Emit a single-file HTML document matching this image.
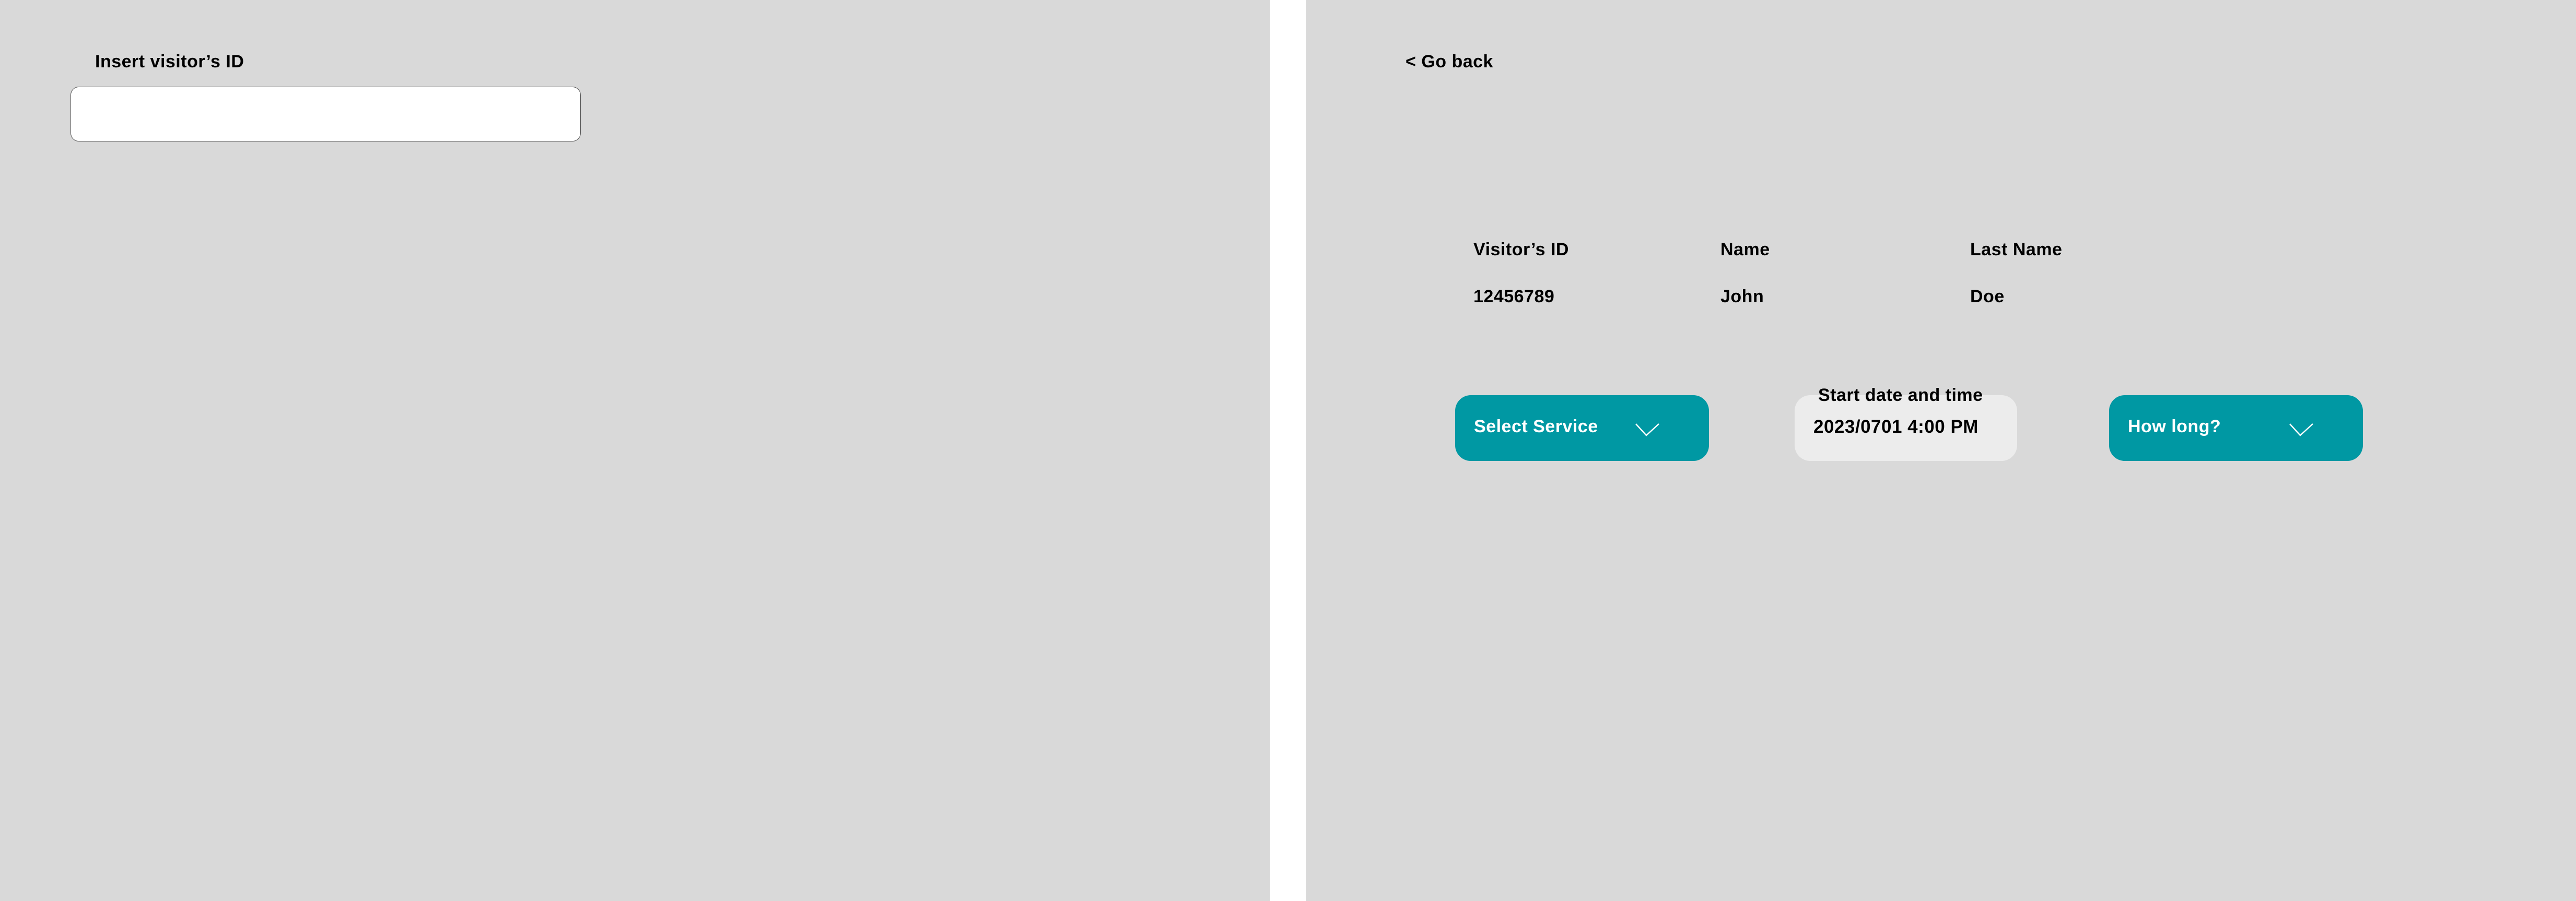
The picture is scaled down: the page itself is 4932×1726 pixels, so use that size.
<!DOCTYPE html>
<html><head><meta charset="utf-8"><style>
html,body{margin:0;padding:0}
body{width:4932px;height:1726px;background:#d9d9d9;position:relative;overflow:hidden;font-family:"Liberation Sans",sans-serif;font-weight:bold;color:#000}
.t{position:absolute;font-size:34px;line-height:34px;white-space:nowrap;letter-spacing:0.5px}
.box{position:absolute;border-radius:30px}
.teal{background:#0098a3}
.w{color:#fff}
</style></head><body>
<div style="position:absolute;left:2432px;top:0;width:68px;height:1726px;background:#fff"></div>

<div class="t" style="left:182px;top:101px">Insert visitor’s ID</div>
<div style="position:absolute;left:135px;top:166px;width:975px;height:103px;background:#fff;border:1.5px solid #555;border-radius:16px"></div>

<div class="t" style="left:2691px;top:101px">&lt; Go back</div>

<div class="t" style="left:2821px;top:461px">Visitor’s ID</div>
<div class="t" style="left:3294px;top:461px">Name</div>
<div class="t" style="left:3772px;top:461px">Last Name</div>
<div class="t" style="left:2821px;top:551px">12456789</div>
<div class="t" style="left:3294px;top:551px">John</div>
<div class="t" style="left:3772px;top:551px">Doe</div>

<div class="box teal" style="left:2786px;top:757px;width:486px;height:126px"></div>
<div class="t w" style="left:2822px;top:800px">Select Service</div>
<svg style="position:absolute;left:3130px;top:810px" width="50" height="28"><polyline points="2,2 22,24 46,2" fill="none" stroke="#fff" stroke-width="2.5"/></svg>

<div class="box" style="left:3436px;top:757px;width:426px;height:126px;background:#ececec"></div>
<div class="t" style="left:3481px;top:740px">Start date and time</div>
<div class="t" style="left:3472px;top:801px;font-size:35px">2023/0701 4:00 PM</div>

<div class="box teal" style="left:4038px;top:757px;width:486px;height:126px"></div>
<div class="t w" style="left:4074px;top:800px">How long?</div>
<svg style="position:absolute;left:4382px;top:810px" width="50" height="28"><polyline points="2,2 22,24 46,2" fill="none" stroke="#fff" stroke-width="2.5"/></svg>
</body></html>
